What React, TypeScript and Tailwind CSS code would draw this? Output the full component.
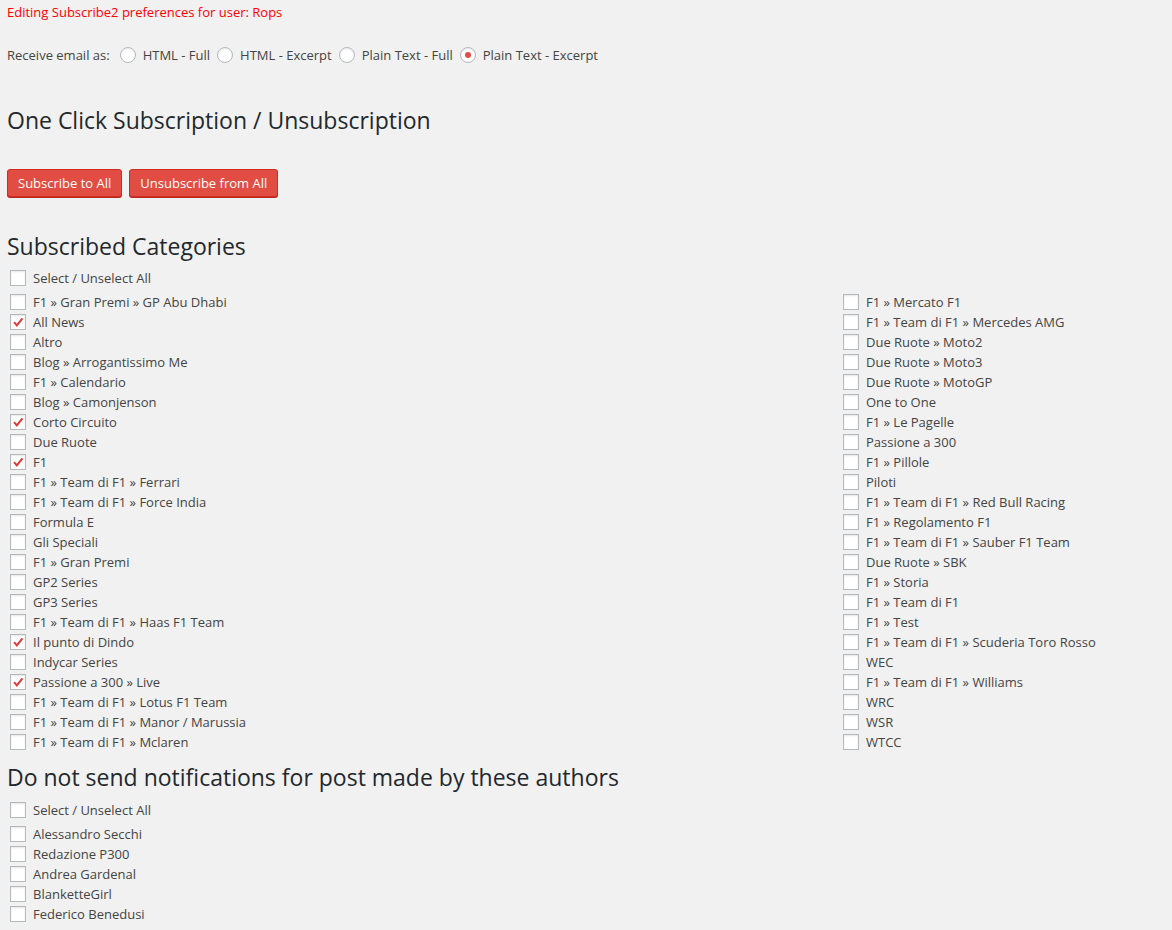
import React from "react";

const left: [string, boolean][] = [
  ["F1 » Gran Premi » GP Abu Dhabi", false],
  ["All News", true],
  ["Altro", false],
  ["Blog » Arrogantissimo Me", false],
  ["F1 » Calendario", false],
  ["Blog » Camonjenson", false],
  ["Corto Circuito", true],
  ["Due Ruote", false],
  ["F1", true],
  ["F1 » Team di F1 » Ferrari", false],
  ["F1 » Team di F1 » Force India", false],
  ["Formula E", false],
  ["Gli Speciali", false],
  ["F1 » Gran Premi", false],
  ["GP2 Series", false],
  ["GP3 Series", false],
  ["F1 » Team di F1 » Haas F1 Team", false],
  ["Il punto di Dindo", true],
  ["Indycar Series", false],
  ["Passione a 300 » Live", true],
  ["F1 » Team di F1 » Lotus F1 Team", false],
  ["F1 » Team di F1 » Manor / Marussia", false],
  ["F1 » Team di F1 » Mclaren", false],
];

const right: string[] = [
  "F1 » Mercato F1",
  "F1 » Team di F1 » Mercedes AMG",
  "Due Ruote » Moto2",
  "Due Ruote » Moto3",
  "Due Ruote » MotoGP",
  "One to One",
  "F1 » Le Pagelle",
  "Passione a 300",
  "F1 » Pillole",
  "Piloti",
  "F1 » Team di F1 » Red Bull Racing",
  "F1 » Regolamento F1",
  "F1 » Team di F1 » Sauber F1 Team",
  "Due Ruote » SBK",
  "F1 » Storia",
  "F1 » Team di F1",
  "F1 » Test",
  "F1 » Team di F1 » Scuderia Toro Rosso",
  "WEC",
  "F1 » Team di F1 » Williams",
  "WRC",
  "WSR",
  "WTCC",
];

const authors = [
  "Alessandro Secchi",
  "Redazione P300",
  "Andrea Gardenal",
  "BlanketteGirl",
  "Federico Benedusi",
];

function Box({ checked }: { checked?: boolean }) {
  return (
    <span className="ml-[3px] flex h-4 w-4 shrink-0 items-center justify-center border border-[#b4b9be] bg-white shadow-[inset_0_1px_2px_rgba(0,0,0,0.1)]">
      {checked && (
        <svg viewBox="0 0 16 16" className="h-[15px] w-[15px]">
          <path d="M2.6 8.4 L4.3 6.9 L6.6 9.4 L12.2 2.6 L14 4 L6.7 13 Z" fill="#dd3d36" />
        </svg>
      )}
    </span>
  );
}

function Row({ label, checked }: { label: string; checked?: boolean }) {
  return (
    <label className="flex h-5 items-center">
      <Box checked={checked} />
      <span className="ml-[7px] whitespace-nowrap">{label}</span>
    </label>
  );
}

function Radio({ label, checked }: { label: string; checked?: boolean }) {
  return (
    <label className="flex items-center">
      <span className="flex h-4 w-4 items-center justify-center rounded-full border border-[#b4b9be] bg-white shadow-[inset_0_1px_2px_rgba(0,0,0,0.1)]">
        {checked && <span className="h-[6px] w-[6px] rounded-full bg-[#e14d43]" />}
      </span>
      <span className="ml-[7px]">{label}</span>
    </label>
  );
}

function Heading({ children, className }: { children: React.ReactNode; className: string }) {
  return (
    <h2 className={`h-[30px] text-[23px] leading-[30px] font-normal text-[#23282d] ${className}`}>{children}</h2>
  );
}

export default function App() {
  return (
    <div className="min-h-[930px] bg-[#f1f1f1] px-[7px] text-[13px] leading-[19px] text-[#444] [font-family:'Open_Sans',sans-serif]">
      <div className="pt-[3px]">
        <p className="h-[19px] text-[#ff0000]">Editing Subscribe2 preferences for user: Rops</p>
      </div>

      <div className="mt-[23px] flex h-5 items-center gap-[7px]">
        <span className="mr-[3px]">Receive email as:</span>
        <Radio label="HTML - Full" />
        <Radio label="HTML - Excerpt" />
        <Radio label="Plain Text - Full" />
        <Radio label="Plain Text - Excerpt" checked />
      </div>

      <Heading className="mt-[40px]">One Click Subscription / Unsubscription</Heading>

      <div className="mt-[34px] flex gap-[7px]">
        <button
          type="button"
          className="h-7 rounded-[3px] border border-[#d02c21] bg-[#e14d43] px-[10px] text-[13px] text-white shadow-[0_1px_0_#ba281e]"
        >
          Subscribe to All
        </button>
        <button
          type="button"
          className="h-7 rounded-[3px] border border-[#d02c21] bg-[#e14d43] px-[10px] text-[13px] text-white shadow-[0_1px_0_#ba281e]"
        >
          Unsubscribe from All
        </button>
      </div>

      <Heading className="mt-[34px]">Subscribed Categories</Heading>
      <div className="mt-[7px]">
        <Row label="Select / Unselect All" />
      </div>
      <div className="mt-[4px] grid grid-cols-[833px_1fr]">
        <div>
          {left.map(([l, c]) => (
            <Row key={l} label={l} checked={c} />
          ))}
        </div>
        <div>
          {right.map((l) => (
            <Row key={l} label={l} />
          ))}
        </div>
      </div>

      <Heading className="mt-[10px]">Do not send notifications for post made by these authors</Heading>
      <div className="mt-[8px]">
        <Row label="Select / Unselect All" />
      </div>
      <div className="mt-[4px]">
        {authors.map((a) => (
          <Row key={a} label={a} />
        ))}
      </div>
    </div>
  );
}
